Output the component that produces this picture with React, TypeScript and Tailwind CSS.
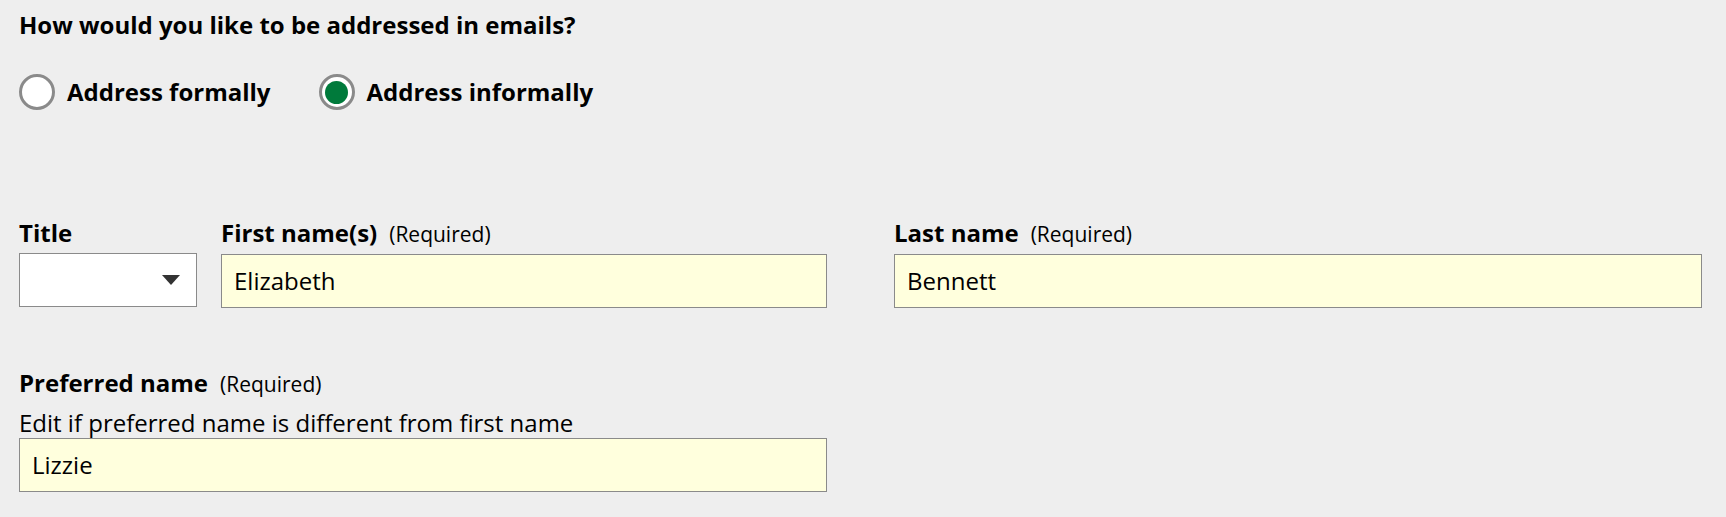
import React, { useState } from "react";

const font = { fontFamily: '"Open Sans", "Noto Sans", Arial, sans-serif' };

function Radio({ checked, label, onClick }: { checked: boolean; label: string; onClick: () => void }) {
  return (
    <button type="button" onClick={onClick} className="flex items-center gap-[12px]">
      <span className="flex h-[36px] w-[36px] items-center justify-center rounded-full border-[3px] border-[#8a8a8a] bg-white">
        {checked && <span className="h-[23px] w-[23px] rounded-full bg-[#007a3b]" />}
      </span>
      <span className="text-[24px] font-bold leading-[36px] text-black">{label}</span>
    </button>
  );
}

function Label({ text, required }: { text: string; required?: boolean }) {
  return (
    <div className="flex items-baseline gap-[12px] leading-[30px]">
      <span className="text-[24px] font-bold text-black">{text}</span>
      {required && <span className="text-[21px] text-black">(Required)</span>}
    </div>
  );
}

function TextInput({ value }: { value: string }) {
  const [v, setV] = useState(value);
  return (
    <input
      value={v}
      onChange={(e) => setV(e.target.value)}
      className="h-[54px] w-full border border-[#8a8a8a] bg-[#ffffdd] px-[12px] pb-[2px] text-[24px] text-black outline-none"
    />
  );
}

export default function App() {
  const [formal, setFormal] = useState(false);

  return (
    <div style={font} className="min-h-[517px] w-full bg-[#eeeeee] pl-[19px] pr-[24px] pt-[10px] text-black">
      <h2 className="text-[24px] font-bold leading-[30px]">How would you like to be addressed in emails?</h2>

      <div className="mt-[34px] flex items-center gap-[48px]">
        <Radio checked={formal} label="Address formally" onClick={() => setFormal(true)} />
        <Radio checked={!formal} label="Address informally" onClick={() => setFormal(false)} />
      </div>

      <div className="mt-[108px] grid grid-cols-[808px_808px] gap-x-[67px]">
        <div className="flex gap-[24px]">
          <div className="w-[178px]">
            <Label text="Title" />
            <div className="mt-[5px] flex h-[54px] items-center justify-end border border-[#8a8a8a] bg-white pr-[16px]">
              <svg width="18" height="10" viewBox="0 0 18 10">
                <path d="M0 0 H18 L9 10 Z" fill="#333333" />
              </svg>
            </div>
          </div>
          <div className="flex-1">
            <Label text="First name(s)" required />
            <div className="mt-[5px]">
              <TextInput value="Elizabeth" />
            </div>
          </div>
        </div>
        <div>
          <Label text="Last name" required />
          <div className="mt-[5px]">
            <TextInput value="Bennett" />
          </div>
        </div>
      </div>

      <div className="mt-[60px] w-[808px]">
        <Label text="Preferred name" required />
        <p className="mt-[9px] text-[24px] leading-[30px]">Edit if preferred name is different from first name</p>
        <TextInput value="Lizzie" />
      </div>
    </div>
  );
}
